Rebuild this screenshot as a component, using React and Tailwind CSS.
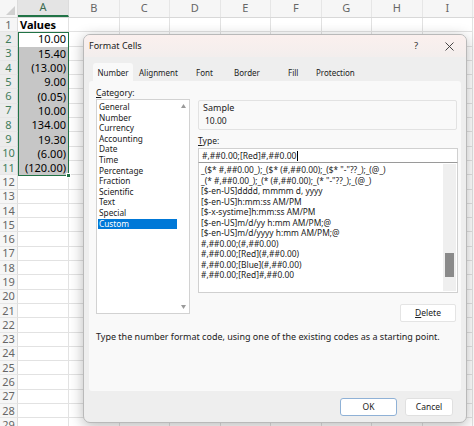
import React from "react";

const cols = ["A", "B", "C", "D", "E", "F", "G", "H", "I"];
const vals = ["10.00", "15.40", "(13.00)", "9.00", "(0.05)", "10.00", "134.00", "19.30", "(6.00)", "(120.00)"];
const rows = Array.from({ length: 29 }, (_, i) => i + 1);

const cats = ["General", "Number", "Currency", "Accounting", "Date", "Time", "Percentage", "Fraction", "Scientific", "Text", "Special", "Custom"];
const fmts = [
  '_($* #,##0.00_);_($* (#,##0.00);_($* "-"??_);_(@_)',
  '_(* #,##0.00_);_(* (#,##0.00);_(* "-"??_);_(@_)',
  "[$-en-US]dddd, mmmm d, yyyy",
  "[$-en-US]h:mm:ss AM/PM",
  "[$-x-systime]h:mm:ss AM/PM",
  "[$-en-US]m/d/yy h:mm AM/PM;@",
  "[$-en-US]m/d/yyyy h:mm AM/PM;@",
  "#,##0.00;(#,##0.00)",
  "#,##0.00;[Red](#,##0.00)",
  "#,##0.00;[Blue](#,##0.00)",
  "#,##0.00;[Red]#,##0.00",
];

function Sheet() {
  return (
    <div className="relative w-[474px] h-[426px] overflow-hidden bg-white font-['Noto_Sans',sans-serif]">
      {/* column headers */}
      <div className="flex h-[18px] bg-[#f6f6f6] border-b border-[#d8d8d8]">
        <div className="w-[18px] shrink-0 relative border-r border-[#dcdcdc]">
          <svg width="9" height="9" className="absolute right-[2px] bottom-[2px]" viewBox="0 0 9 9">
            <path d="M9 0 L9 9 L0 9 Z" fill="#d0d0d0" />
          </svg>
        </div>
        {cols.map((c, i) => (
          <div
            key={c}
            className={
              i === 0
                ? "w-[51px] shrink-0 flex items-center justify-center text-[11px] text-[#3b6b50] bg-[#e4e4e4] border-b-2 border-[#217346] border-r border-r-[#dcdcdc]"
                : "w-[50.5px] shrink-0 flex items-center justify-center text-[11px] text-[#666] border-r border-[#e6e6e6]"
            }
          >
            {c}
          </div>
        ))}
      </div>
      {rows.map((r) => {
        const sel = r >= 2 && r <= 11;
        return (
          <div key={r} className="flex h-[14.3px]">
            <div
              className={
                sel
                  ? "w-[18px] shrink-0 flex items-center justify-center text-[11px] leading-[14px] text-[#3f7d5c] bg-[#ececec] border-r border-[#d4d4d4] border-b border-b-[#e6e6e6]"
                  : "w-[18px] shrink-0 flex items-center justify-center text-[11px] leading-[14px] text-[#666] bg-[#f6f6f6] border-r border-[#dcdcdc] border-b border-b-[#e6e6e6]"
              }
            >
              {r}
            </div>
            <div
              className={
                r === 1
                  ? "w-[51px] shrink-0 flex items-center pl-[2px] text-[11px] leading-[14px] font-bold text-black border-r border-b border-[#e2e2e2]"
                  : r === 2
                  ? "w-[51px] shrink-0 flex items-center justify-end pr-[3px] text-[11px] leading-[14px] text-black bg-white"
                  : sel
                  ? "w-[51px] shrink-0 flex items-center justify-end pr-[3px] text-[11px] leading-[14px] text-black bg-[#c6c6c6]"
                  : "w-[51px] shrink-0 border-r border-b border-[#e2e2e2]"
              }
            >
              {r === 1 ? "Values" : sel ? vals[r - 2] : ""}
            </div>
            {cols.slice(1).map((c) => (
              <div key={c} className="w-[50.5px] shrink-0 border-r border-b border-[#e2e2e2]" />
            ))}
          </div>
        );
      })}
      {/* selection border */}
      <div className="absolute left-[18px] top-[32px] w-[51px] h-[143.5px] border-[1.5px] border-[#217346] pointer-events-none" />
      <div className="absolute left-[66px] top-[172.5px] w-[5px] h-[5px] bg-[#217346] border border-white" />
      <Dialog />
    </div>
  );
}

function Dialog() {
  return (
    <div className="absolute left-[83px] top-[34px] w-[384px] h-[389px] rounded-[7px] border border-[#b9b9b9] bg-[#eeeeee] shadow-[0_3px_14px_rgba(0,0,0,0.28)] flex flex-col overflow-hidden text-[#1a1a1a] font-['Noto_Sans',sans-serif]">
      {/* title */}
      <div className="h-[22px] shrink-0 flex items-center pl-[5px] pr-[10px] bg-gradient-to-b from-[#fbf0ee] to-[#f3eeed]">
        <span className="text-[9px] leading-[12px]">Format Cells</span>
        <span className="ml-auto text-[9.5px] leading-[12px] text-[#333] mr-[27px]">?</span>
        <svg width="9" height="9" viewBox="0 0 9 9" className="mr-[2px]">
          <path d="M0.5 0.5 L8.5 8.5 M8.5 0.5 L0.5 8.5" stroke="#333" strokeWidth="0.9" />
        </svg>
      </div>
      {/* tabs */}
      <div className="h-[24px] shrink-0 flex items-end pl-[9px] text-[8px] leading-[11px] text-[#222]">
        <div className="h-[18px] w-[40px] flex items-center justify-center bg-[#f9f9f9] rounded-t-[3px]">Number</div>
        <div className="h-[18px] w-[63px] flex items-center pl-[6px]">Alignment</div>
        <div className="h-[18px] w-[38px] flex items-center">Font</div>
        <div className="h-[18px] w-[54px] flex items-center">Border</div>
        <div className="h-[18px] w-[28px] flex items-center">Fill</div>
        <div className="h-[18px] flex items-center">Protection</div>
      </div>
      {/* panel */}
      <div className="mx-[5px] h-[310px] shrink-0 bg-[#f9f9f9] rounded-[3px] pl-[7px] pt-[6px] flex flex-col">
        <div className="flex gap-[8px]">
          <div className="w-[94px] flex flex-col">
            <div className="h-[12px] flex items-center text-[8.5px] leading-[12px]">
              <span><span className="underline">C</span>ategory:</span>
            </div>
            <div className="h-[215px] bg-white border border-[#d2d2d2] flex">
              <div className="flex-1 pt-[2px] pl-[1px] flex flex-col">
                {cats.map((c) => (
                  <div
                    key={c}
                    className={
                      c === "Custom"
                        ? "h-[10.6px] flex items-center pl-[1px] text-[8.3px] leading-[10.6px] bg-[#0078d7] text-white"
                        : "h-[10.6px] flex items-center pl-[1px] text-[8.3px] leading-[10.6px] text-[#222]"
                    }
                  >
                    {c}
                  </div>
                ))}
              </div>
              <div className="w-[12px] flex flex-col items-center justify-between py-[4px]">
                <svg width="5" height="4" viewBox="0 0 5 4"><path d="M2.5 0 L5 4 L0 4 Z" fill="#9a9a9a" /></svg>
                <svg width="5" height="4" viewBox="0 0 5 4"><path d="M0 0 L5 0 L2.5 4 Z" fill="#9a9a9a" /></svg>
              </div>
            </div>
          </div>
          <div className="w-[260px] pt-[13px] flex flex-col">
            <div className="h-[30px] w-[259px] border border-[#e2e2e2] rounded-[2px] flex flex-col pl-[4px] pt-[1px]">
              <div className="h-[11px] flex items-center text-[9px] leading-[11px] text-[#222]">Sample</div>
              <div className="h-[15px] flex items-center pl-[2px] text-[8.5px] leading-[12px] text-[#222]">10.00</div>
            </div>
            <div className="h-[12px] mt-[5px] flex items-center text-[8.5px] leading-[12px]">
              <span><span className="underline">T</span>ype:</span>
            </div>
            <div className="h-[15px] mt-[1px] bg-white border border-[#d0d0d0] border-b-[#9a9a9a] flex items-center pl-[3px] text-[8.5px] leading-[12px] text-[#222]">
              #,##0.00;[Red]#,##0.00
              <span className="inline-block w-[1px] h-[10px] bg-black ml-[1px]" />
            </div>
            <div className="h-[130px] bg-white border border-[#d0d0d0] border-t-0 flex">
              <div className="flex-1 pt-[2px] pl-[2px] flex flex-col">
                {fmts.map((f, i) => (
                  <div key={i} className="h-[10.5px] flex items-center text-[8.4px] leading-[10.5px] text-[#222] whitespace-pre">
                    {f}
                  </div>
                ))}
              </div>
              <div className="w-[13px] bg-[#efefef] my-[1px] mr-[1px] flex flex-col">
                <div className="h-[89px]" />
                <div className="h-[24px] mx-[2px] bg-[#8a8a8a]" />
              </div>
            </div>
            <div className="flex justify-end mt-[11px] pr-[2px]">
              <div className="w-[56px] h-[18px] bg-white border border-[#e4e4e4] rounded-[2px] flex items-center justify-center text-[8.5px] leading-[12px] text-[#222]">
                <span><span className="underline">D</span>elete</span>
              </div>
            </div>
          </div>
        </div>
        <div className="mt-[9px] h-[12px] flex items-center text-[9px] leading-[12px] text-[#222]">
          Type the number format code, using one of the existing codes as a starting point.
        </div>
      </div>
      {/* footer */}
      <div className="flex-1 flex items-center justify-end pr-[13px] gap-[8px]">
        <div className="w-[57px] h-[18px] bg-white border border-[#8fb1d6] rounded-[3px] flex items-center justify-center text-[8.5px] leading-[12px] text-[#222]">OK</div>
        <div className="w-[48px] h-[18px] bg-white border border-[#e0e0e0] rounded-[3px] flex items-center justify-center text-[8.5px] leading-[12px] text-[#222]">Cancel</div>
      </div>
    </div>
  );
}

export default function App() {
  return <Sheet />;
}
